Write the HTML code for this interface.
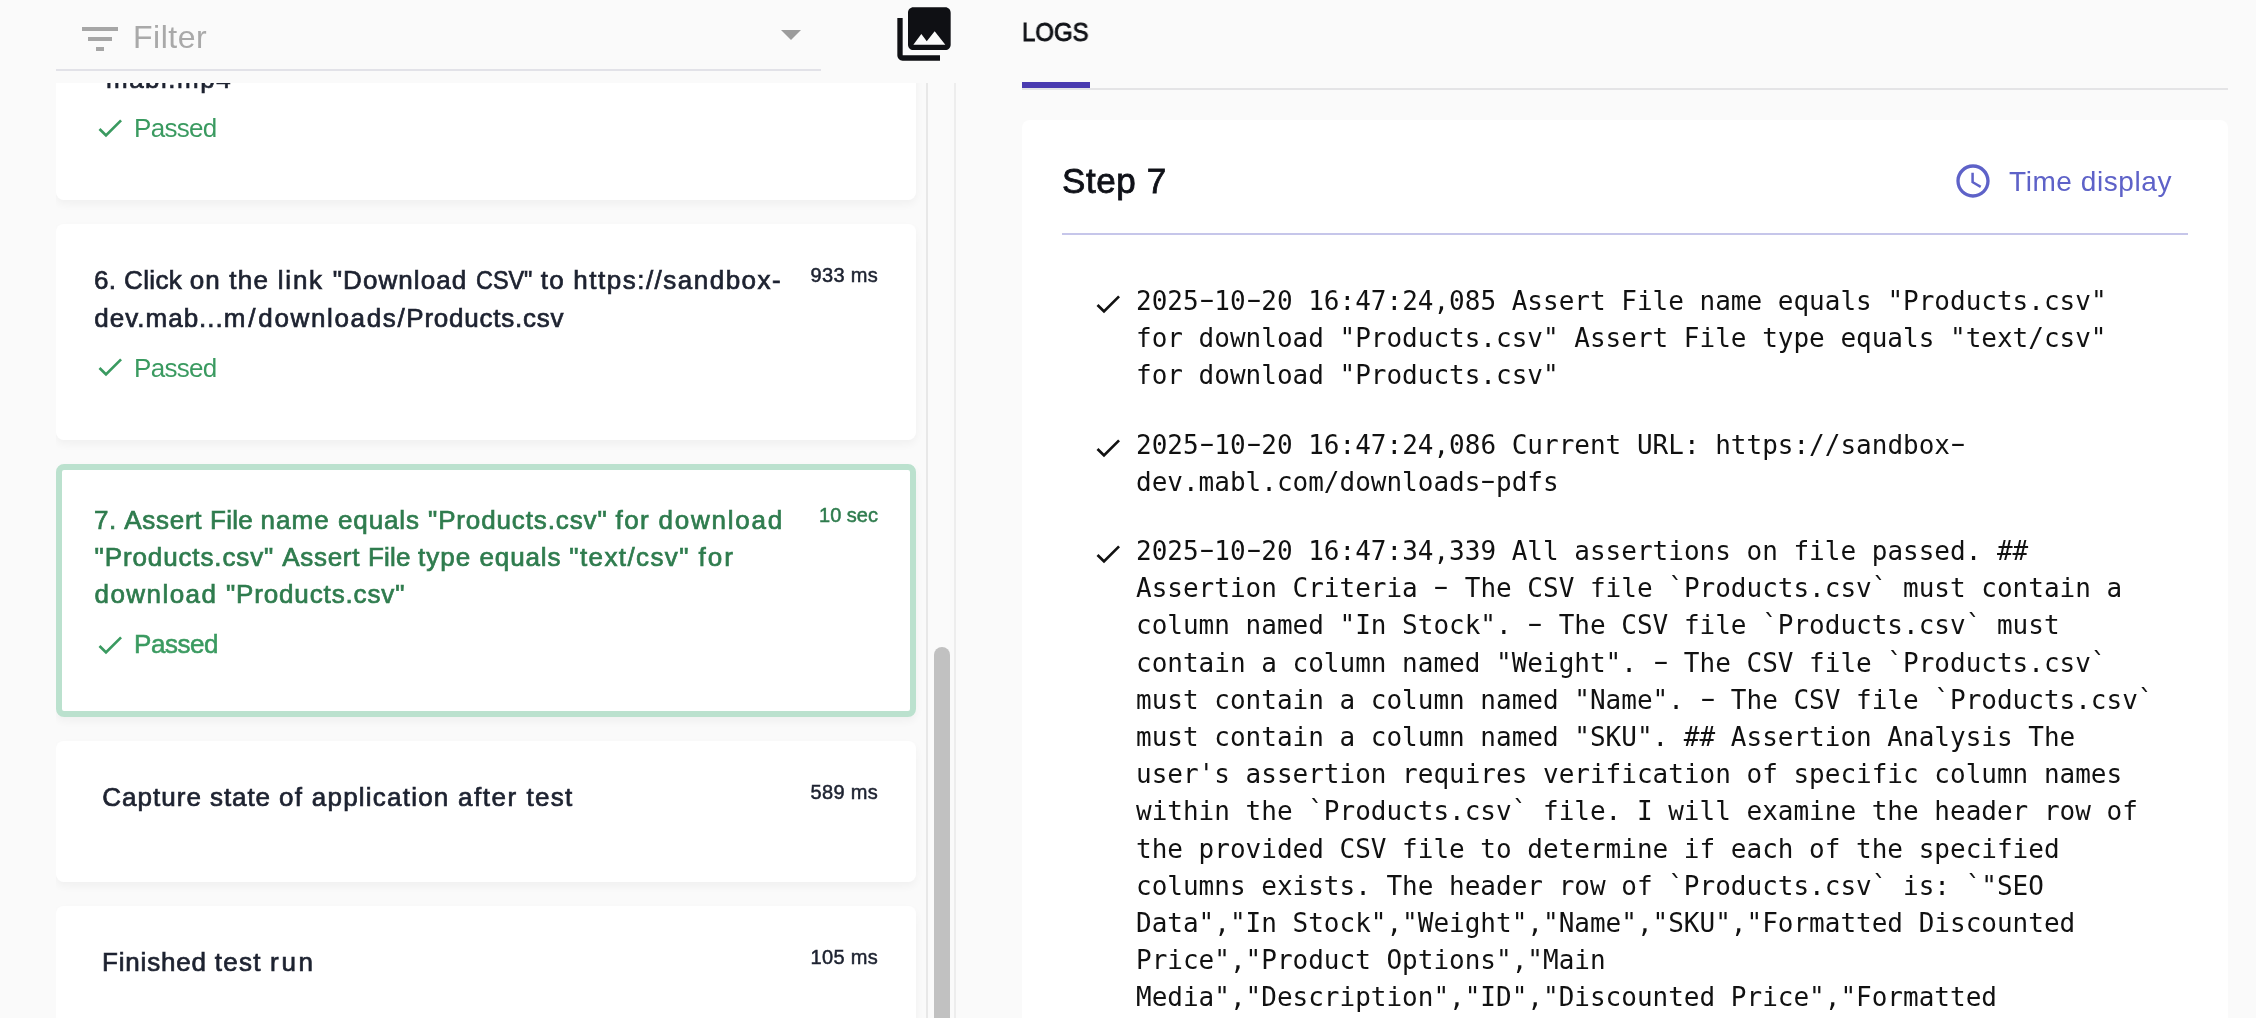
<!DOCTYPE html>
<html lang="en">
<head>
<meta charset="utf-8">
<title>Test output</title>
<style>
*{box-sizing:border-box;margin:0;padding:0}
html,body{width:2256px;height:1018px;overflow:hidden;background:#fafafa}
body{position:relative;font-family:"Liberation Sans",sans-serif;color:#1d2230}
.abs{position:absolute}
.list,.panel,.filter,.tab{will-change:transform}
.nw{white-space:nowrap}
svg{display:block}

/* ---------- filter bar ---------- */
.filter{left:56px;top:0;width:765px;height:71px;border-bottom:2px solid #e2e2e8}
.filter .ficon{left:20px;top:15px;width:48px;height:48px;fill:#a6a6a6}
.filter .ftext{left:77px;top:15px;font-size:32px;line-height:44px;color:#a9a9a9;letter-spacing:.5px}
.filter .farrow{left:711px;top:10px;width:48px;height:48px;fill:#9c9c9c}
.imgicon{left:892px;top:2px;width:64px;height:64px;fill:#0f1014}

/* ---------- step list ---------- */
.list{left:56px;top:83px;width:900px;height:935px;overflow:hidden}
.track{left:870px;top:0;width:30px;height:935px;background:#fafafa;border-left:2px solid #e8e8e8;border-right:2px solid #ededed}
.thumb{left:878px;top:564px;width:16px;height:400px;border-radius:8px;background:#c1c1c1}
.card{left:0;width:860px;background:#fff;border-radius:8px;box-shadow:0 4px 8px rgba(0,0,0,.045)}
.card.sel{border:6px solid #bbe1ce}
.t{font-size:26px;line-height:37.5px;color:#1d2230;-webkit-text-stroke:.7px #1d2230;left:39px}
.sel .t{color:#2f7c4e;-webkit-text-stroke-color:#2f7c4e;left:33px}
.t.ind{left:47px}
.dur{right:38px;margin-top:-1px;letter-spacing:.3px;font-size:20px;line-height:28px;color:#1d2230;-webkit-text-stroke:.5px #1d2230}
.sel .dur{right:32px;color:#2f7c4e;-webkit-text-stroke-color:#2f7c4e}
.pass{left:38px;height:32px}
.sel .pass{left:32px}
.pass svg{left:0;top:0;width:32px;height:32px;fill:#3a9a60}
.pass span{left:40px;top:-1.5px;font-size:26px;line-height:37.5px;color:#3a9a60;letter-spacing:-.7px}
.sel .pass span{top:-2.5px;letter-spacing:-.45px;-webkit-text-stroke:.55px #3a9a60}

/* ---------- logs panel ---------- */
.tabline{left:1022px;top:88px;width:1206px;height:2px;background:#e4e4e6}
.tabbar{left:1022px;top:82px;width:68px;height:6px;background:#4a3bb0}
.tab{left:1022px;top:13.5px;font-size:26px;line-height:37.5px;color:#111318;-webkit-text-stroke:.9px #111318;transform:scaleX(.92);transform-origin:0 0}
.panel{left:1022px;top:120px;width:1206px;height:920px;background:#fff;border-radius:8px}
.h{left:40px;top:37px;font-size:35px;line-height:48px;color:#0f1118;-webkit-text-stroke:.8px #0f1118;letter-spacing:.6px}
.clock{left:931px;top:41px;width:40px;height:40px;fill:#5e62c8}
.td{left:987px;top:42px;font-size:28px;line-height:40px;color:#5e62c8;letter-spacing:.57px}
.rule{left:40px;top:113px;width:1126px;height:2px;background:#c6c6ea}
.chk{left:70px;width:32px;height:32px;fill:#111}
.log{left:114px;font-family:"DejaVu Sans Mono","Liberation Mono",monospace;font-size:26px;line-height:37.18px;color:#111;white-space:pre}
.hy{display:inline-block;transform:translateY(-2px) scaleX(1.75)}
</style>
</head>
<body>

<!-- filter bar -->
<div class="abs filter">
  <svg class="abs ficon" viewBox="0 0 24 24"><path d="M10 18h4v-2h-4v2zM3 6v2h18V6H3zm3 7h12v-2H6v2z"/></svg>
  <div class="abs ftext nw">Filter</div>
  <svg class="abs farrow" viewBox="0 0 24 24"><path d="M7 10l5 5 5-5z"/></svg>
</div>
<svg class="abs imgicon" viewBox="0 0 24 24"><path d="M22 16V4c0-1.1-.9-2-2-2H8c-1.1 0-2 .9-2 2v12c0 1.1.9 2 2 2h12c1.1 0 2-.9 2-2zm-11-4l2.03 2.71L16 11l4 5H8l3-4zM2 6v14c0 1.1.9 2 2 2h14v-2H4V6H2z"/></svg>

<!-- step list -->
<div class="abs list">
  <div class="abs track"></div>
  <div class="abs thumb"></div>

  <div class="abs card" style="top:-99px;height:216px">
    <div class="abs t nw" style="top:76.5px;left:50px;letter-spacing:1.5px">mabl.mp4</div>
    <div class="abs pass" style="top:127px"><svg class="abs" style="top:1px" viewBox="0 0 24 24"><path d="M9 16.17L4.83 12l-1.42 1.41L9 19 21 7l-1.41-1.41z"/></svg><span class="abs nw">Passed</span></div>
  </div>

  <div class="abs card" style="top:141px;height:216px">
    <div class="abs t nw" style="top:38px;left:38.0px"><span style="letter-spacing:0.4px">6. </span><span style="letter-spacing:0.34px">Click </span><span style="letter-spacing:1.12px">on </span><span style="letter-spacing:1.31px">the </span><span style="letter-spacing:1.75px">link </span><span style="letter-spacing:1.06px">"Download </span><span style="display:inline-block;transform:scaleX(.9);transform-origin:0 50%;margin-right:-6.3px">CSV"</span><span style="letter-spacing:1.6px"> </span><span style="letter-spacing:1.23px">to </span><span style="letter-spacing:1.49px">https://sandbox-</span></div>
    <div class="abs t nw" style="top:75.5px;left:38.3px"><span style="letter-spacing:1px">dev.mab...</span><span style="letter-spacing:2.81px">m/</span><span style="letter-spacing:1.65px">downloads/</span><span style="letter-spacing:0.75px">Products.csv</span></div>
    <div class="abs dur nw" style="top:38px">933 ms</div>
    <div class="abs pass" style="top:127px"><svg class="abs" viewBox="0 0 24 24"><path d="M9 16.17L4.83 12l-1.42 1.41L9 19 21 7l-1.41-1.41z"/></svg><span class="abs nw">Passed</span></div>
  </div>

  <div class="abs card sel" style="top:381px;height:253px">
    <div class="abs t nw" style="top:31.5px;left:32.1px"><span style="letter-spacing:0.43px">7. </span><span style="letter-spacing:0.7px">Assert </span><span style="letter-spacing:0.26px">File </span><span style="letter-spacing:1.03px">name </span><span style="letter-spacing:0.89px">equals </span><span style="letter-spacing:0.87px">"Products.csv" </span><span style="letter-spacing:1.31px">for </span><span style="letter-spacing:1.79px">download</span></div>
    <div class="abs t nw" style="top:68.5px;left:32.6px"><span style="letter-spacing:0.88px">"Products.csv" </span><span style="letter-spacing:0.68px">Assert </span><span style="letter-spacing:0.18px">File </span><span style="letter-spacing:1.03px">type </span><span style="letter-spacing:0.85px">equals </span><span style="letter-spacing:1.39px">"text/csv" </span><span style="letter-spacing:2.06px">for</span></div>
    <div class="abs t nw" style="top:105.5px;left:32.6px"><span style="letter-spacing:1.42px">download </span><span style="letter-spacing:0.86px">"Products.csv"</span></div>
    <div class="abs dur nw" style="top:32px;letter-spacing:0">10 sec</div>
    <div class="abs pass" style="top:158.5px"><svg class="abs" viewBox="0 0 24 24"><path d="M9 16.17L4.83 12l-1.42 1.41L9 19 21 7l-1.41-1.41z"/></svg><span class="abs nw">Passed</span></div>
  </div>

  <div class="abs card" style="top:658px;height:141px">
    <div class="abs t nw" style="top:38px;left:46.3px"><span style="letter-spacing:1.01px">Capture </span><span style="letter-spacing:0.88px">state </span><span style="letter-spacing:1.3px">of </span><span style="letter-spacing:1.22px">application </span><span style="letter-spacing:1.53px">after </span><span style="letter-spacing:1.31px">test</span></div>
    <div class="abs dur nw" style="top:38px">589 ms</div>
  </div>

  <div class="abs card" style="top:823px;height:141px">
    <div class="abs t nw" style="top:38px;left:46.0px"><span style="letter-spacing:0.81px">Finished </span><span style="letter-spacing:1.23px">test </span><span style="letter-spacing:2.64px">run</span></div>
    <div class="abs dur nw" style="top:38px">105 ms</div>
  </div>
</div>

<!-- logs panel -->
<div class="abs tab nw">LOGS</div>
<div class="abs tabline"></div>
<div class="abs tabbar"></div>

<div class="abs panel">
  <div class="abs h nw">Step 7</div>
  <svg class="abs clock" viewBox="0 0 24 24"><path d="M11.99 2C6.47 2 2 6.48 2 12s4.47 10 9.99 10C17.52 22 22 17.52 22 12S17.52 2 11.99 2zM12 20c-4.42 0-8-3.58-8-8s3.58-8 8-8 8 3.58 8 8-3.58 8-8 8zm.5-13H11v6l5.25 3.15.75-1.23-4.5-2.67z"/></svg>
  <div class="abs td nw">Time display</div>
  <div class="abs rule"></div>

  <svg class="abs chk" style="top:168.3px" viewBox="0 0 24 24"><path d="M9 16.17L4.83 12l-1.42 1.41L9 19 21 7l-1.41-1.41z"/></svg>
  <div class="abs log" style="top:163px">2025<span class="hy">-</span>10<span class="hy">-</span>20 16:47:24,085 Assert File name equals "Products.csv"
for download "Products.csv" Assert File type equals "text/csv"
for download "Products.csv"</div>

  <svg class="abs chk" style="top:312px" viewBox="0 0 24 24"><path d="M9 16.17L4.83 12l-1.42 1.41L9 19 21 7l-1.41-1.41z"/></svg>
  <div class="abs log" style="top:307px">2025<span class="hy">-</span>10<span class="hy">-</span>20 16:47:24,086 Current URL: https://sandbox<span class="hy">-</span>
dev.mabl.com/downloads<span class="hy">-</span>pdfs</div>

  <svg class="abs chk" style="top:418px" viewBox="0 0 24 24"><path d="M9 16.17L4.83 12l-1.42 1.41L9 19 21 7l-1.41-1.41z"/></svg>
  <div class="abs log" style="top:413px">2025<span class="hy">-</span>10<span class="hy">-</span>20 16:47:34,339 All assertions on file passed. ##
Assertion Criteria <span class="hy">-</span> The CSV file `Products.csv` must contain a
column named "In Stock". <span class="hy">-</span> The CSV file `Products.csv` must
contain a column named "Weight". <span class="hy">-</span> The CSV file `Products.csv`
must contain a column named "Name". <span class="hy">-</span> The CSV file `Products.csv`
must contain a column named "SKU". ## Assertion Analysis The
user's assertion requires verification of specific column names
within the `Products.csv` file. I will examine the header row of
the provided CSV file to determine if each of the specified
columns exists. The header row of `Products.csv` is: `"SEO
Data","In Stock","Weight","Name","SKU","Formatted Discounted
Price","Product Options","Main
Media","Description","ID","Discounted Price","Formatted</div>
</div>

</body>
</html>
